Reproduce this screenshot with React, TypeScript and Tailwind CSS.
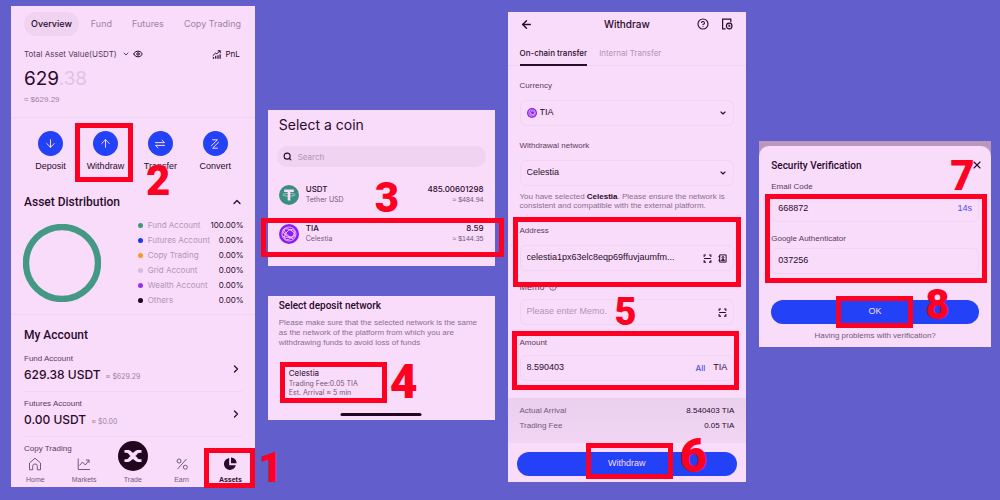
import { useState } from "react";
import type { ReactNode } from "react";
import {
  ArrowDown,
  ArrowLeft,
  ArrowUp,
  ChevronDown,
  ChevronRight,
  ChevronUp,
  CircleHelp,
  Eye,
  Search,
  X,
} from "lucide-react";

const panel = "relative bg-[#f9dcf9] text-[#2b0a2e]";
const heading = "font-[Roboto,sans-serif] font-medium";
const narrow = "font-['Liberation_Sans',sans-serif]";
const fieldLabel = "text-[8px] leading-[12px] text-[#5c3a60]";
const field =
  "flex h-[26px] w-full items-center rounded-md border border-[#f3d3f3] px-[6px]";

function Frame({ className }: { className: string }) {
  return (
    <div
      aria-hidden="true"
      className={`pointer-events-none absolute z-10 border-5 border-[#ff0022] ${className}`}
    />
  );
}

const stepSizes = {
  sm: "text-[38px] leading-[38px]",
  md: "text-[42px] leading-[42px]",
  lg: "text-[48px] leading-[48px]",
};

function Step({ n, size = "md", className }: { n: number; size?: keyof typeof stepSizes; className: string }) {
  return (
    <span
      className={`pointer-events-none absolute z-20 font-[Roboto,sans-serif] font-black text-[#ff0022] ${stepSizes[size]} ${className}`}
    >
      {n}
    </span>
  );
}

function TransferIcon() {
  return (
    <svg viewBox="0 0 12 12" className="size-3" fill="none" stroke="currentColor" strokeLinecap="round" strokeLinejoin="round">
      <path d="M1.500 4.600h9L8 2.200M10.500 7.400h-9L4 9.800" />
    </svg>
  );
}

function ConvertIcon() {
  return (
    <svg viewBox="0 0 12 12" className="size-3" fill="none" stroke="currentColor" strokeLinecap="round" strokeLinejoin="round">
      <path d="M3.600 1.800h4.800L2.400 7.800M8.400 10.200H3.600l6-6" />
    </svg>
  );
}

function PnlIcon() {
  return (
    <svg viewBox="0 0 12 12" className="size-[9px]" fill="none" stroke="currentColor" strokeWidth="1.300">
      <path d="M1 7.500 5 4l1.500 1L11 1M7.600 1H11v3.200" />
      <path d="M2 11.500V9.300M5 11.500V7.500M8 11.500V7M10.800 11.500V5.500" strokeWidth="1.600" />
    </svg>
  );
}

function ScanIcon() {
  return (
    <svg viewBox="0 0 12 12" className="size-[9px] shrink-0" fill="none" stroke="currentColor" strokeWidth="1.400">
      <path d="M1.500 4V1.200H4M8 1.200h2.500V4M10.500 8v2.800H8M4 10.800H1.500V8M1.500 6h9" />
    </svg>
  );
}

function BookIcon() {
  return (
    <svg viewBox="0 0 12 12" className="size-[9px] shrink-0" fill="none" stroke="currentColor" strokeWidth="1.300">
      <path d="M2.200 1.200h8.600v9.600H2.200zM.5 3.600h2.500M.5 8.400h2.500" />
      <circle cx="6.600" cy="4.600" r="1.300" />
      <path d="M4.200 8.800c.3-2.300 4.500-2.300 4.800 0z" />
    </svg>
  );
}

function RecordIcon() {
  return (
    <svg viewBox="0 0 12 12" className="size-3" fill="none" stroke="currentColor" strokeWidth="1.200">
      <path d="M4.600 10.800H1.600V1.200h8.200v3" />
      <circle cx="8.200" cy="8" r="2.800" />
      <path d="M8 6.600v1.600h1.400" />
    </svg>
  );
}

function TetherIcon() {
  return (
    <svg viewBox="0 0 20 20" className="size-5 shrink-0">
      <circle cx="10" cy="10" r="10" fill="#3c8f80" />
      <path d="M5.200 4.600h9.600v2.500h-3.500v8.300H8.700V7.100H5.200z" fill="#f9dcf9" />
      <ellipse cx="10" cy="9.800" rx="6" ry="1.400" fill="none" stroke="#f9dcf9" strokeWidth=".6" />
    </svg>
  );
}

function CelestiaIcon({ className }: { className: string }) {
  return (
    <svg viewBox="0 0 20 20" className={className}>
      <circle cx="10" cy="10" r="10" fill="#8a1df5" />
      <g fill="none" stroke="#f0c4fa" strokeWidth=".9">
        <circle cx="10" cy="10" r="7" />
        <ellipse cx="10" cy="9" rx="6.600" ry="3.400" transform="rotate(28 10 9)" />
        <ellipse cx="10.500" cy="10.500" rx="6.200" ry="3.600" transform="rotate(-48 10.500 10.500)" />
        <path d="M3.500 12c4 2.600 9 2 13-1.500M5 5.500c2 5 5 8 9.500 9.500" />
      </g>
    </svg>
  );
}

function TradeLogo() {
  return (
    <svg viewBox="0 0 30 30" className="size-[30px]">
      <circle cx="15" cy="15" r="15" fill="#23051f" />
      <path
        d="M6.500 9H10c2.800 0 3.700 2.700 5 2.700S17.200 9 20 9h3.500v2.800h-2c-2.400 0-2.600 3.200-4.400 3.200 1.800 0 2 3.200 4.400 3.200h2V21H20c-2.800 0-3.700-2.700-5-2.700S12.800 21 10 21H6.500v-2.800h2c2.400 0 2.600-3.200 4.400-3.200-1.800 0-2-3.200-4.400-3.200h-2z"
        fill="#f9dcf9"
      />
    </svg>
  );
}

const navIcon = "size-[14px]";

function HomeIcon() {
  return (
    <svg viewBox="0 0 14 14" className={navIcon} fill="none" stroke="currentColor">
      <path d="M1.500 6 7 1.200 12.500 6v6.800H9.300V9.200a2.300 2.300 0 0 0-4.600 0v3.600H1.500z" strokeLinejoin="round" />
    </svg>
  );
}

function MarketsIcon() {
  return (
    <svg viewBox="0 0 14 14" className={navIcon} fill="none" stroke="currentColor">
      <path d="M1.200 1.500v11H13M2.500 8.500l3-3.500 2.800 3L12 3.200M8.800 3H12v3" />
    </svg>
  );
}

function EarnIcon() {
  return (
    <svg viewBox="0 0 14 14" className={navIcon} fill="none" stroke="currentColor">
      <path d="M11.500 2 2.500 12" />
      <circle cx="4" cy="4" r="2" />
      <circle cx="10.300" cy="10.200" r="2" />
    </svg>
  );
}

function AssetsIcon() {
  return (
    <svg viewBox="0 0 14 14" className={navIcon} fill="currentColor">
      <path d="M6.200 1a6 6 0 1 0 6.600 7.200H6.200z" />
      <path d="M8 .6v5.700h5.600C13.500 3.200 11.200.8 8 .6z" />
    </svg>
  );
}

const actions: [string, ReactNode][] = [
  ["Deposit", <ArrowDown className="size-[13px]" strokeWidth={1.8} />],
  ["Withdraw", <ArrowUp className="size-[13px]" strokeWidth={1.8} />],
  ["Transfer", <TransferIcon />],
  ["Convert", <ConvertIcon />],
];

const accounts = [
  ["Fund Account", "100.00%", "bg-[#3f9482]"],
  ["Futures Account", "0.00%", "bg-[#1d35f5]"],
  ["Copy Trading", "0.00%", "bg-[#f79a26]"],
  ["Grid Account", "0.00%", "bg-[#dab9dd]"],
  ["Wealth Account", "0.00%", "bg-[#9a2ff2]"],
  ["Others", "0.00%", "bg-[#1d041c]"],
];

const balances = [
  ["Fund Account", "629.38 USDT", "≈ $629.29"],
  ["Futures Account", "0.00 USDT", "≈ $0.00"],
];

function OverviewPanel() {
  return (
    <section className={`${panel} mt-1.5 px-[13px]`}>
      <nav className="flex h-9 items-center gap-5 text-[9px] whitespace-nowrap text-[#a183a5]">
        <button className="-mr-2 h-6 rounded-full bg-[#f0d3f1] px-[7px] font-medium text-[#2b0a2e]">Overview</button>
        <button>Fund</button>
        <button>Futures</button>
        <button>Copy Trading</button>
      </nav>
      <div className="mt-1.5 flex h-3 items-center text-[8px] text-[#5c3a60]">
        <span>Total Asset Value(USDT)</span>
        <ChevronDown className="ml-[5px] size-2" strokeWidth={3} />
        <Eye className="ml-[3px] size-[10px] text-[#2b0a2e]" strokeWidth={2.4} />
        <button className="ml-auto flex items-center gap-1 pr-0.5 text-[#2b0a2e]">
          <PnlIcon />
          PnL
        </button>
      </div>
      <p className="mt-2 text-[19px] leading-[22px]">
        629<span className="text-[#e2c1e4]">.38</span>
      </p>
      <p className={`mt-1 h-[23px] text-[8px] leading-[12px] text-[#a183a5] ${narrow}`}>≈ $629.29</p>
      <div className={`-mx-[13px] grid h-16 grid-cols-4 border-t border-[#f3d3f3] px-3 pt-[13px] ${narrow}`}>
        {actions.map(([label, icon]) => (
          <button key={label} className="flex flex-col items-center gap-1 text-[9px] leading-[12px]">
            <span className="flex size-[25px] items-center justify-center rounded-full bg-[#2342f7] text-[#f9dcf9]">{icon}</span>
            {label}
          </button>
        ))}
      </div>
      <div className={`mt-[13px] flex h-4 items-center justify-between text-[12px] ${heading}`}>
        <h2>Asset Distribution</h2>
        <ChevronUp className="-mr-px size-3" strokeWidth={2.6} />
      </div>
      <div className="-mr-0.5 -ml-px mt-2 flex h-[90px] items-center justify-between">
        <svg viewBox="0 0 78 78" className="size-[78px]">
          <circle cx="39" cy="39" r="36" fill="none" stroke="#439984" strokeWidth="6.400" />
        </svg>
        <ul className="w-[106px] text-[8px] leading-[15px]">
          {accounts.map(([name, share, dot]) => (
            <li key={name} className="flex items-center whitespace-nowrap text-[#b394b7]">
              <span className={`mr-[5px] size-[5px] shrink-0 rounded-full ${dot}`} />
              {name}
              <span className="ml-auto text-[#2b0a2e]">{share}</span>
            </li>
          ))}
        </ul>
      </div>
      <div className="-mx-[13px] mt-1.5 border-t border-[#f3d3f3] px-[13px] pt-3">
        <h2 className={`text-[12px] leading-[16px] ${heading}`}>My Account</h2>
        {balances.map(([name, amount, value]) => (
          <div key={name} className="flex h-[45px] items-center justify-between border-b border-[#f3d3f3] first-of-type:mt-1">
            <div>
              <p className={`${fieldLabel} ${narrow}`}>{name}</p>
              <p className="mt-0.5 text-[12px] leading-[16px] font-medium">
                {amount} <span className="ml-0.5 text-[7px] font-normal text-[#a183a5]">{value}</span>
              </p>
            </div>
            <ChevronRight className="size-3" strokeWidth={2.6} />
          </div>
        ))}
        <p className={`mt-1.5 ${fieldLabel} ${narrow}`}>Copy Trading</p>
      </div>
      <nav className={`-mx-[13px] grid h-8 grid-cols-5 items-end pb-0.5 text-[7px] leading-[10px] text-[#775779] ${narrow}`}>
        <a href="#home" className="flex flex-col items-center gap-1"><HomeIcon />Home</a>
        <a href="#markets" className="flex flex-col items-center gap-1"><MarketsIcon />Markets</a>
        <a href="#trade" className="-mt-5 flex flex-col items-center gap-1"><TradeLogo />Trade</a>
        <a href="#earn" className="flex flex-col items-center gap-1"><EarnIcon />Earn</a>
        <a href="#assets" className="flex flex-col items-center gap-1 font-bold text-[#2b0a2e]"><AssetsIcon />Assets</a>
      </nav>
      <Frame className="top-[117px] left-16 h-[59px] w-[58px]" />
      <Step n={2} className="top-[154px] left-[135px]" />
      <Frame className="right-0 -bottom-px h-10 w-[51px]" />
      <Step n={1} className="-right-7 -bottom-0.5" />
    </section>
  );
}

function CoinRow({ icon, name, sub, amount, value }: { icon: ReactNode; name: string; sub: string; amount: string; value: string }) {
  return (
    <li className="flex h-[39px] items-center">
      {icon}
      <div className="ml-[7px] text-[8px] leading-[11px] font-medium">
        {name}
        <p className="text-[7px] leading-[10px] font-normal text-[#775779]">{sub}</p>
      </div>
      <div className="ml-auto text-right text-[8px] leading-[11px] font-medium">
        {amount}
        <p className={`text-[7px] leading-[10px] font-normal text-[#775779] ${narrow}`}>{value}</p>
      </div>
    </li>
  );
}

function CoinPanel() {
  return (
    <section className={`${panel} h-[156px] px-[11px] pt-[5px]`}>
      <h2 className="text-[14px] leading-[20px]">Select a coin</h2>
      <label className="mt-[11px] -mr-0.5 -ml-0.5 flex h-[21px] items-center gap-1.5 rounded-full bg-[#f0d3f1] px-1.5">
        <Search className="size-[9px]" strokeWidth={3} />
        <input aria-label="Search" placeholder="Search" className="min-w-0 flex-1 bg-transparent text-[8px] outline-none placeholder:text-[#b394b7]" />
      </label>
      <ul className="mt-2">
        <CoinRow icon={<TetherIcon />} name="USDT" sub="Tether USD" amount="485.00601298" value="≈ $484.94" />
        <CoinRow icon={<CelestiaIcon className="size-5 shrink-0" />} name="TIA" sub="Celestia" amount="8.59" value="≈ $144.35" />
      </ul>
      <Frame className="top-[108px] -right-[9px] -left-[7px] h-[39px]" />
      <Step n={3} className="top-[67px] left-[107px]" />
    </section>
  );
}

function NetworkPanel() {
  return (
    <section className={`${panel} mt-[30px] h-[124px] px-[11px] pt-[3px]`}>
      <h2 className={`text-[10px] leading-[13px] ${heading}`}>Select deposit network</h2>
      <p className={`mt-1.5 text-[8px] leading-[10px] text-[#8d6d91] ${narrow}`}>
        Please make sure that the selected network is the same as the network of the platform from which you are withdrawing funds to avoid loss of funds
      </p>
      <button className="mt-3.5 ml-px block w-[107px] border-5 border-[#ff0022] py-px pl-1 text-left">
        <span className="block text-[8px] leading-[11px]">Celestia</span>
        <span className="block text-[7px] leading-[9px] text-[#775779]">Trading Fee:0.05 TIA</span>
        <span className="block text-[7px] leading-[9px] text-[#775779]">Est. Arrival ≈ 5 min</span>
      </button>
      <Step n={4} size="lg" className="top-[62px] left-[122px]" />
      <div className="absolute bottom-1 left-1/2 h-[3px] w-[81px] -translate-x-1/2 rounded-full bg-[#23051f]" />
    </section>
  );
}

function SelectField({ id, label, options, icon }: { id: string; label: string; options: string[]; icon?: ReactNode }) {
  return (
    <div>
      <label htmlFor={id} className={`block ${fieldLabel}`}>{label}</label>
      <div className={`${field} mt-2`}>
        {icon}
        <select id={id} className="min-w-0 flex-1 appearance-none bg-transparent text-[9px] outline-none">
          {options.map((o) => <option key={o}>{o}</option>)}
        </select>
        <ChevronDown className="size-2" strokeWidth={3.4} />
      </div>
    </div>
  );
}

function WithdrawPanel() {
  const [address, setAddress] = useState("celestia1px63elc8eqp69ffuvjaumfm...");
  const [memo, setMemo] = useState("");
  const [amount, setAmount] = useState("8.590403");
  return (
    <section className={`${panel} mt-3 h-[470px]`}>
      <header className="flex h-6 items-center justify-between px-3">
        <button aria-label="Back"><ArrowLeft className="size-[13px]" strokeWidth={2.6} /></button>
        <h1 className="ml-6 text-[10px] font-medium">Withdraw</h1>
        <div className="flex items-center gap-3 pr-px">
          <button aria-label="Help"><CircleHelp className="size-3" strokeWidth={2.2} /></button>
          <button aria-label="Records"><RecordIcon /></button>
        </div>
      </header>
      <div className="mt-1.5 flex h-6 gap-3 border-b border-[#f3d3f3] px-3 text-[8px]">
        <button className="-mb-px border-b-2 border-[#2b0a2e] font-medium">On-chain transfer</button>
        <button className="-mb-px border-b-2 border-transparent text-[#b394b7]">Internal Transfer</button>
      </div>
      <div className={`px-3 pt-3.5 ${narrow}`}>
        <SelectField id="currency" label="Currency" options={["TIA"]} icon={<CelestiaIcon className="mr-[3px] size-[10px]" />} />
        <div className="mt-3.5">
          <SelectField id="network" label="Withdrawal network" options={["Celestia"]} />
        </div>
        <p className="mt-1.5 text-[8px] leading-[9px] text-[#8d6d91]">
          You have selected <b className="text-[#2b0a2e]">Celestia</b>. Please ensure the network is consistent and compatible with the external platform.
        </p>
        <label htmlFor="address" className={`mt-[15px] block ${fieldLabel}`}>Address</label>
        <div className={`${field} mt-2 gap-1.5`}>
          <input id="address" value={address} onChange={(e) => setAddress(e.target.value)} className="min-w-0 flex-1 bg-transparent text-[9px] outline-none" />
          <button aria-label="Scan address"><ScanIcon /></button>
          <button aria-label="Address book"><BookIcon /></button>
        </div>
        <label htmlFor="memo" className="mt-2.5 flex items-center gap-1 text-[9px] leading-[12px] text-[#5c3a60]">
          Memo <CircleHelp className="size-2" />
        </label>
        <div className={`${field} mt-1.5`}>
          <input id="memo" value={memo} placeholder="Please enter Memo." onChange={(e) => setMemo(e.target.value)} className="min-w-0 flex-1 bg-transparent text-[9px] outline-none placeholder:text-[#b394b7]" />
          <button aria-label="Scan memo"><ScanIcon /></button>
        </div>
        <label htmlFor="amount" className={`mt-3 block ${fieldLabel}`}>Amount</label>
        <div className={`${field} mt-1.5 gap-2 text-[9px]`}>
          <input id="amount" value={amount} onChange={(e) => setAmount(e.target.value)} className="min-w-0 flex-1 bg-transparent outline-none" />
          <button className="font-[Inter,sans-serif] text-[8px] font-medium text-[#4b50ea]">All</button>
          <span>TIA</span>
        </div>
      </div>
      <dl className={`mt-[17px] grid h-[45px] grid-cols-2 content-start bg-linear-to-b from-[#ebd0ed] to-[#f1d5f2] px-3 pt-[5px] text-[8px] leading-[15px] text-[#775779] ${narrow}`}>
        <dt>Actual Arrival</dt>
        <dd className="text-right text-[#2b0a2e]">8.540403 TIA</dd>
        <dt>Trading Fee</dt>
        <dd className="text-right text-[#2b0a2e]">0.05 TIA</dd>
      </dl>
      <div className={`px-[9px] pt-1.5 ${narrow}`}>
        <button className="h-6 w-full rounded-full bg-[#2342f7] text-[9px] text-[#f9dcf9]">Withdraw</button>
      </div>
      <Frame className="top-[205px] right-[5px] left-[5px] h-[70px]" />
      <Frame className="top-[319px] right-[7px] left-1 h-[59px]" />
      <Frame className="bottom-[3px] left-[78px] h-9 w-[87px]" />
      <Step n={5} size="sm" className="top-[281px] left-[107px]" />
      <Step n={6} size="lg" className="bottom-0.5 left-[172px]" />
    </section>
  );
}

function VerifyPanel() {
  const [email, setEmail] = useState("668872");
  const [auth, setAuth] = useState("037256");
  return (
    <section className="relative mt-[141px] h-[206px] bg-[#bc97bd] pt-[5px]">
      <div className={`h-full rounded-t-[10px] bg-[#f9dcf9] px-3 pt-[11px] text-[#2b0a2e] ${narrow}`}>
        <div className="flex h-4 items-center justify-between">
          <h2 className={`text-[10px] ${heading}`}>Security Verification</h2>
          <button aria-label="Close"><X className="-mr-1 size-3" strokeWidth={2.2} /></button>
        </div>
        <label htmlFor="email" className={`mt-2 block ${fieldLabel}`}>Email Code</label>
        <div className={`${field} mt-[3px]`}>
          <input id="email" value={email} onChange={(e) => setEmail(e.target.value)} className="min-w-0 flex-1 bg-transparent text-[9px] outline-none" />
          <span className="text-[9px] text-[#4b50ea]">14s</span>
        </div>
        <label htmlFor="auth" className={`mt-[11px] block ${fieldLabel}`}>Google Authenticator</label>
        <div className={`${field} mt-[3px]`}>
          <input id="auth" value={auth} onChange={(e) => setAuth(e.target.value)} className="min-w-0 flex-1 bg-transparent text-[9px] outline-none" />
        </div>
        <button className="mt-[26px] h-6 w-full rounded-full bg-[#2342f7] text-[9px] text-[#f9dcf9]">OK</button>
        <a href="#help" className="mt-1.5 block text-center text-[8px] leading-[12px] text-[#775779]">Having problems with verification?</a>
      </div>
      <Frame className="top-[53px] right-1 left-1.5 h-[89px]" />
      <Frame className="top-[155px] left-[77px] h-8 w-[77px]" />
      <Step n={7} className="top-[14px] left-[191px]" />
      <Step n={8} className="top-[143px] left-[166px]" />
    </section>
  );
}

export default function App() {
  return (
    <main className="grid min-h-screen grid-cols-[244fr_227fr_239fr_232fr] items-start gap-x-[13px] bg-[#625ecb] pr-[9px] pl-[11px] font-[Inter,sans-serif]">
      <OverviewPanel />
      <div className="mt-[110px]">
        <CoinPanel />
        <NetworkPanel />
      </div>
      <WithdrawPanel />
      <VerifyPanel />
    </main>
  );
}
